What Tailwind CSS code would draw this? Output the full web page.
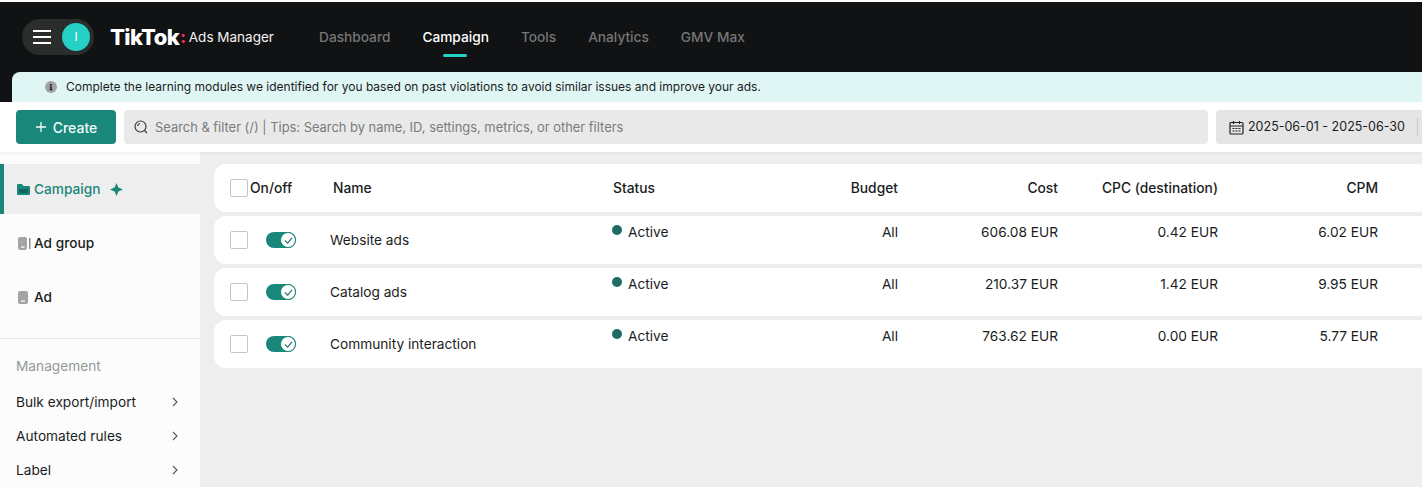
<!DOCTYPE html>
<html lang="en">
<head>
<meta charset="UTF-8">
<title>TikTok Ads Manager</title>
<script src="https://cdn.jsdelivr.net/npm/@tailwindcss/browser@4"></script>
</head>
<body class="bg-[#fcfcfc] font-['Inter','Liberation_Sans',sans-serif] text-[#1a1c1c] text-[13.7px] h-[487px] overflow-hidden">
  <!-- Top bar -->
  <div class="mt-[2px] h-[100px] bg-[#111213] flex flex-col">
    <div class="h-[70px] flex items-center pl-[22px]">
      <div class="w-[72px] h-[36px] rounded-full bg-[#2b2d2d] flex items-center pl-[11px]">
        <svg width="18" height="16" viewBox="0 0 18 16" fill="none" stroke="#fff" stroke-width="2"><path d="M0 2h18M0 8h18M0 14h18"/></svg>
        <div class="ml-[11px] w-[28px] h-[28px] rounded-full bg-[#27d0c5] text-white text-[12px] flex items-center justify-center">I</div>
      </div>
      <div class="ml-[16px] flex items-center w-[209px]">
        <span class="text-white text-[22px] font-extrabold tracking-[-0.6px]">TikTok</span><span class="text-[#ff2d55] text-[16px] font-extrabold ml-[1px]">:</span>
        <span class="text-[#f2f2f2] text-[13.5px] ml-[3px]">Ads Manager</span>
      </div>
      <nav class="flex gap-[32px] text-[13.7px] font-medium text-[#747676]">
        <span>Dashboard</span>
        <span class="relative text-white">Campaign<span class="absolute left-[21px] top-[27px] w-[24px] h-[3px] rounded-full bg-[#27d0c5]"></span></span>
        <span>Tools</span>
        <span>Analytics</span>
        <span>GMV Max</span>
      </nav>
    </div>
    <div class="ml-[12px] h-[30px] rounded-tl-[8px] bg-[#e0f6f4] flex items-center pl-[33px] text-[12px] text-[#1a1c1c]">
      <svg width="12" height="12" viewBox="0 0 12 12"><circle cx="6" cy="6" r="6" fill="#a3a5a5"/><path d="M4.8 3h2v1.4h-2zM4.6 5.2h2.2v3h.7v1H4.4v-1h.9V6.2h-.7z" fill="#1a1c1c"/></svg>
      <span class="ml-[9px]">Complete the learning modules we identified for you based on past violations to avoid similar issues and improve your ads.</span>
    </div>
  </div>

  <!-- Toolbar -->
  <div class="h-[50px] flex items-start pt-[8px] pl-[16px] gap-[8px] bg-white shadow-[0_1px_3px_rgba(0,0,0,0.06)] relative">
    <div class="w-[100px] h-[34px] shrink-0 rounded-[4px] bg-[#1a877b] text-[#f0fbfa] font-medium text-[14px] flex items-center justify-center gap-[6px]">
      <svg width="12" height="12" viewBox="0 0 12 12" fill="none" stroke="currentColor" stroke-width="1.3"><path d="M6 1v10M1 6h10"/></svg>
      <span>Create</span>
    </div>
    <div class="w-[1084px] h-[34px] shrink-0 rounded-[4px] bg-[#e9e9e9] flex items-center pl-[9px] text-[12.9px] text-[#7a7c7c]">
      <svg width="16" height="16" viewBox="0 0 16 16" fill="none" stroke="#3a3c3c" stroke-width="1.2"><circle cx="7.5" cy="7.5" r="5.5"/><path d="M11.5 11.5l2.5 2.5M4.5 7a3.2 3.2 0 0 1 2.5-2.5"/></svg>
      <span class="ml-[6px] pt-[1px]">Search &amp; filter (/) | Tips: Search by name, ID, settings, metrics, or other filters</span>
    </div>
    <div class="flex-1 h-[34px] rounded-l-[4px] bg-[#e5e5e5] flex items-center pl-[13px] text-[12.5px] whitespace-nowrap">
      <svg class="shrink-0" width="15" height="15" viewBox="0 0 15 15" fill="none" stroke="#222" stroke-width="1.2"><rect x="1" y="2.5" width="13" height="11.5" rx="1"/><path d="M1 6h13M4.5 1v3M10.5 1v3M3.5 8.5h2M6.5 8.5h2M9.5 8.5h2M3.5 11h2M6.5 11h2M9.5 11h2"/></svg>
      <span class="ml-[4px]">2025-06-01 - 2025-06-30</span>
      <span class="ml-[12px] w-px h-[18px] bg-[#c9c9c9]"></span>
    </div>
  </div>

  <div class="flex h-[335px]">
    <!-- Sidebar -->
    <aside class="w-[200px] shrink-0 pt-[12px] bg-[#fcfcfc]">
      <div class="h-[50px] bg-[#eeeeee] border-l-[4px] border-[#1a877b] flex items-center pl-[12px] text-[#1a877b] font-medium">
        <svg width="15" height="13" viewBox="0 0 15 13" fill="#1a877b"><path d="M1 2a1 1 0 0 1 1-1h4l1.5 2H13a1 1 0 0 1 1 1v7a1 1 0 0 1-1 1H2a1 1 0 0 1-1-1z"/><path d="M3 6h9v4H3z" fill="#12665c"/></svg>
        <span class="ml-[3px]">Campaign</span>
        <svg class="ml-[9px]" width="13" height="13" viewBox="0 0 13 13" fill="#1a877b"><path d="M6.5 0l1.9 4.6L13 6.5 8.4 8.4 6.5 13 4.6 8.4 0 6.5l4.6-1.9z"/></svg>
      </div>
      <div class="h-[50px] mt-[4px] flex items-center pl-[18px] font-medium">
        <svg width="13" height="13" viewBox="0 0 13 13" fill="#a3a5a5"><rect x="0" y="0" width="9" height="13" rx="2"/><rect x="11" y="1" width="1.5" height="11" fill="#8a8c8c"/><rect x="3" y="9.5" width="3.5" height="1.2" fill="#fff"/></svg>
        <span class="ml-[3px]">Ad group</span>
      </div>
      <div class="h-[50px] mt-[4px] flex items-center pl-[18px] font-medium">
        <svg width="13" height="13" viewBox="0 0 13 13" fill="#a3a5a5"><rect x="0" y="0" width="10" height="13" rx="2"/><rect x="3" y="9.5" width="4" height="1.2" fill="#fff"/></svg>
        <span class="ml-[3px]">Ad</span>
      </div>
      <div class="mt-[16px] border-t border-[#e5e5e5] pl-[16px] pr-[22px] pt-[19px]">
        <div class="text-[#929a9a] leading-[17px]">Management</div>
        <div class="mt-[10px] h-[34px] flex items-center justify-between"><span>Bulk export/import</span><svg width="6" height="10" viewBox="0 0 6 10" fill="none" stroke="#555" stroke-width="1.1"><path d="M1 1l4 4-4 4"/></svg></div>
        <div class="h-[34px] flex items-center justify-between"><span>Automated rules</span><svg width="6" height="10" viewBox="0 0 6 10" fill="none" stroke="#555" stroke-width="1.1"><path d="M1 1l4 4-4 4"/></svg></div>
        <div class="h-[34px] flex items-center justify-between"><span>Label</span><svg width="6" height="10" viewBox="0 0 6 10" fill="none" stroke="#555" stroke-width="1.1"><path d="M1 1l4 4-4 4"/></svg></div>
      </div>
    </aside>

    <!-- Table -->
    <main class="flex-1 bg-[#eeeeee] pl-[14px] pt-[12px] flex flex-col gap-[4px]">
      <div class="h-[48px] bg-white rounded-l-[12px] pl-[16px] grid grid-cols-[100px_283px_125px_160px_160px_160px_160px] items-center font-medium text-[13.8px]">
        <div class="flex items-center">
          <span class="w-[18px] h-[18px] border border-[#c4c6c6] rounded-[2px] bg-white"></span>
          <span class="ml-[2px]">On/off</span>
        </div>
        <div class="pl-[3px]">Name</div>
        <div>Status</div>
        <div class="text-right">Budget</div>
        <div class="text-right">Cost</div>
        <div class="text-right">CPC (destination)</div>
        <div class="text-right">CPM</div>
      </div>
      <div class="h-[48px] bg-white rounded-l-[12px] pl-[16px] grid grid-cols-[100px_282px_126px_160px_160px_160px_160px]">
        <div class="flex items-center">
          <span class="w-[18px] h-[18px] border border-[#c4c6c6] rounded-[2px]"></span>
          <span class="ml-[18px] relative w-[30px] h-[16px] rounded-full bg-[#1a877b]"><span class="absolute right-0 top-0 w-[16px] h-[16px] rounded-full bg-white border border-[#1a877b] flex items-center justify-center"><svg width="9" height="7" viewBox="0 0 10 8" fill="none" stroke="#3d7a74" stroke-width="1.5"><path d="M1 4l3 3 5-6"/></svg></span></span>
        </div>
        <div class="self-center">Website ads</div>
        <div class="pt-[6px] flex items-start"><span class="mt-[3px] w-[10px] h-[10px] rounded-full bg-[#1d6d66]"></span><span class="ml-[6px]">Active</span></div>
        <div class="pt-[6px] text-right">All</div>
        <div class="pt-[6px] text-right">606.08 EUR</div>
        <div class="pt-[6px] text-right">0.42 EUR</div>
        <div class="pt-[6px] text-right">6.02 EUR</div>
      </div>
      <div class="h-[48px] bg-white rounded-l-[12px] pl-[16px] grid grid-cols-[100px_282px_126px_160px_160px_160px_160px]">
        <div class="flex items-center">
          <span class="w-[18px] h-[18px] border border-[#c4c6c6] rounded-[2px]"></span>
          <span class="ml-[18px] relative w-[30px] h-[16px] rounded-full bg-[#1a877b]"><span class="absolute right-0 top-0 w-[16px] h-[16px] rounded-full bg-white border border-[#1a877b] flex items-center justify-center"><svg width="9" height="7" viewBox="0 0 10 8" fill="none" stroke="#3d7a74" stroke-width="1.5"><path d="M1 4l3 3 5-6"/></svg></span></span>
        </div>
        <div class="self-center">Catalog ads</div>
        <div class="pt-[6px] flex items-start"><span class="mt-[3px] w-[10px] h-[10px] rounded-full bg-[#1d6d66]"></span><span class="ml-[6px]">Active</span></div>
        <div class="pt-[6px] text-right">All</div>
        <div class="pt-[6px] text-right">210.37 EUR</div>
        <div class="pt-[6px] text-right">1.42 EUR</div>
        <div class="pt-[6px] text-right">9.95 EUR</div>
      </div>
      <div class="h-[48px] bg-white rounded-l-[12px] pl-[16px] grid grid-cols-[100px_282px_126px_160px_160px_160px_160px]">
        <div class="flex items-center">
          <span class="w-[18px] h-[18px] border border-[#c4c6c6] rounded-[2px]"></span>
          <span class="ml-[18px] relative w-[30px] h-[16px] rounded-full bg-[#1a877b]"><span class="absolute right-0 top-0 w-[16px] h-[16px] rounded-full bg-white border border-[#1a877b] flex items-center justify-center"><svg width="9" height="7" viewBox="0 0 10 8" fill="none" stroke="#3d7a74" stroke-width="1.5"><path d="M1 4l3 3 5-6"/></svg></span></span>
        </div>
        <div class="self-center">Community interaction</div>
        <div class="pt-[6px] flex items-start"><span class="mt-[3px] w-[10px] h-[10px] rounded-full bg-[#1d6d66]"></span><span class="ml-[6px]">Active</span></div>
        <div class="pt-[6px] text-right">All</div>
        <div class="pt-[6px] text-right">763.62 EUR</div>
        <div class="pt-[6px] text-right">0.00 EUR</div>
        <div class="pt-[6px] text-right">5.77 EUR</div>
      </div>
    </main>
  </div>
</body>
</html>
